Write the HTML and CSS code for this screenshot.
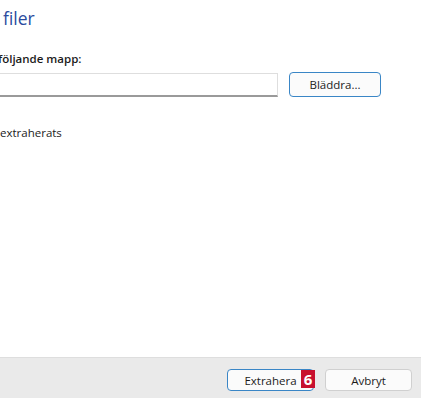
FILE: index.html
```html
<!DOCTYPE html>
<html lang="sv">
<head>
<meta charset="utf-8">
<link rel="stylesheet" href="styles.css">
</head>
<body>
<div class="dialog">
  <div class="main">
    <div class="title">filer</div>
    <div class="label">följande mapp:</div>
    <div class="row">
      <div class="input"></div>
      <button class="btn btn-primary browse">Bläddra...</button>
    </div>
    <div class="check">extraherats</div>
  </div>
  <div class="footer">
    <div class="btn-wrap">
      <button class="btn btn-primary action">Extrahera</button>
      <span class="badge">6</span>
    </div>
    <button class="btn action">Avbryt</button>
  </div>
</div>
</body>
</html>
```
FILE: styles.css
```css
html, body {
  margin: 0;
  padding: 0;
  background: #ffffff;
}
body {
  font-family: "Open Sans", "Noto Sans", sans-serif;
  color: #1b1b1b;
  width: 421px;
  height: 398px;
  overflow: hidden;
}
.dialog {
  display: flex;
  flex-direction: column;
  height: 398px;
}
.main {
  height: 357px;
  box-sizing: border-box;
  padding-top: 7px;
}
.title {
  font-size: 17.5px;
  line-height: 22px;
  color: #2a4a9e;
  margin-left: 3px;
}
.label {
  font-size: 11.5px;
  font-weight: 600;
  line-height: 16px;
  margin-top: 22px;
  margin-left: -2px;
}
.row {
  display: flex;
  align-items: center;
  margin-top: 5px;
  gap: 11px;
}
.input {
  width: 278px;
  height: 21px;
  box-sizing: content-box;
  border: 1px solid #dedede;
  border-left: none;
  border-bottom: 2px solid #9a9a9a;
  margin-left: -1px;
}
.btn {
  font-family: inherit;
  font-size: 11.5px;
  color: #1b1b1b;
  background: #fbfbfb;
  border: 1px solid #d0d0d0;
  border-radius: 4px;
  padding: 0;
  box-sizing: border-box;
}
.btn-primary {
  border-color: #3a86c6;
}
.browse {
  width: 92px;
  height: 25px;
}
.check {
  font-size: 11.5px;
  line-height: 16px;
  margin-top: 28px;
  margin-left: 0;
}
.footer {
  flex: 1;
  background: #eaeaea;
  border-top: 1px solid #dedede;
  display: flex;
  justify-content: flex-end;
  align-items: flex-start;
  gap: 11px;
  padding: 11px 9px 0 0;
}
.btn-wrap {
  position: relative;
  display: flex;
}
.action {
  width: 87px;
  height: 22px;
}
.badge {
  position: absolute;
  left: 74px;
  top: 1px;
  width: 14px;
  height: 18px;
  background: #c8102e;
  color: #ffffff;
  font-weight: 700;
  font-size: 15px;
  line-height: 18px;
  text-align: center;
}
```
